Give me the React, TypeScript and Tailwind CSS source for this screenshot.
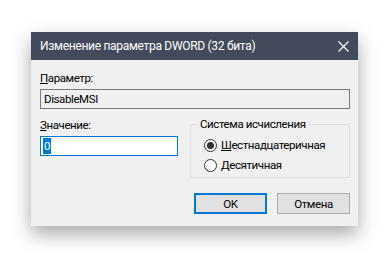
import React from "react";

function Radio({ checked }: { checked?: boolean }) {
  return (
    <span className="w-[13px] h-[13px] rounded-full border border-[#333333] bg-white flex items-center justify-center shrink-0">
      {checked && <span className="w-[7px] h-[7px] rounded-full bg-[#333333]" />}
    </span>
  );
}

export default function App() {
  return (
    <div
      className="w-[390px] h-[258px] bg-white pt-[32px] pl-[31px] text-[11.5px] leading-[16px] tracking-[-0.4px] text-black"
      style={{ fontFamily: 'Roboto, "Liberation Sans", sans-serif' }}
    >
      <div className="w-[327px] h-[194px] bg-[#f0f0f0] flex flex-col shadow-[0_8px_18px_rgba(0,0,0,0.35)]">
        {/* Title bar */}
        <div className="h-[28px] bg-[#434a5b] flex items-center justify-between pl-[9px] pr-[8px] text-white text-[12px] tracking-[-0.3px]">
          <span>Изменение параметра DWORD (32 бита)</span>
          <svg width="11" height="11" viewBox="0 0 11 11" className="mr-[1px]">
            <path d="M0.5 0.5 L10.5 10.5 M10.5 0.5 L0.5 10.5" stroke="#ffffff" strokeWidth="1.2" />
          </svg>
        </div>

        {/* Body */}
        <div className="flex flex-col pl-[9px] pr-[8px] pt-[10px]">
          <label>
            <span className="underline">П</span>араметр:
          </label>
          <div className="mt-[3px] h-[20px] border border-[#7a7a7a] bg-[#f0f0f0] flex items-center pl-[3px]">
            DisableMSI
          </div>

          <div className="flex mt-[8px]">
            <div className="flex flex-col w-[138px]">
              <label>
                <span className="underline">З</span>начение:
              </label>
              <div className="mt-[3px] h-[20px] border border-[#0078d7] bg-white flex items-center pl-[2px]">
                <span className="bg-[#0078d7] text-white px-[1px]">0</span>
              </div>
            </div>

            <fieldset className="ml-[12px] flex-1 border border-[#dcdcdc] rounded-[2px] pl-[13px] pt-[3px] pb-[2px] -mt-[1px]">
              <legend className="ml-[-6px] px-[2px]">Система исчисления</legend>
              <div className="h-[20px] flex items-center gap-[4px]">
                <Radio checked />
                <span>
                  <span className="underline">Ш</span>естнадцатеричная
                </span>
              </div>
              <div className="h-[20px] flex items-center gap-[4px]">
                <Radio />
                <span>
                  <span className="underline">Д</span>есятичная
                </span>
              </div>
            </fieldset>
          </div>

          <div className="flex justify-end gap-[10px] mt-[15px]">
            <button className="w-[73px] h-[21px] bg-[#e1e1e1] border-2 border-[#0078d7]">OK</button>
            <button className="w-[73px] h-[21px] bg-[#e1e1e1] border border-[#adadad]">Отмена</button>
          </div>
        </div>
      </div>
    </div>
  );
}
